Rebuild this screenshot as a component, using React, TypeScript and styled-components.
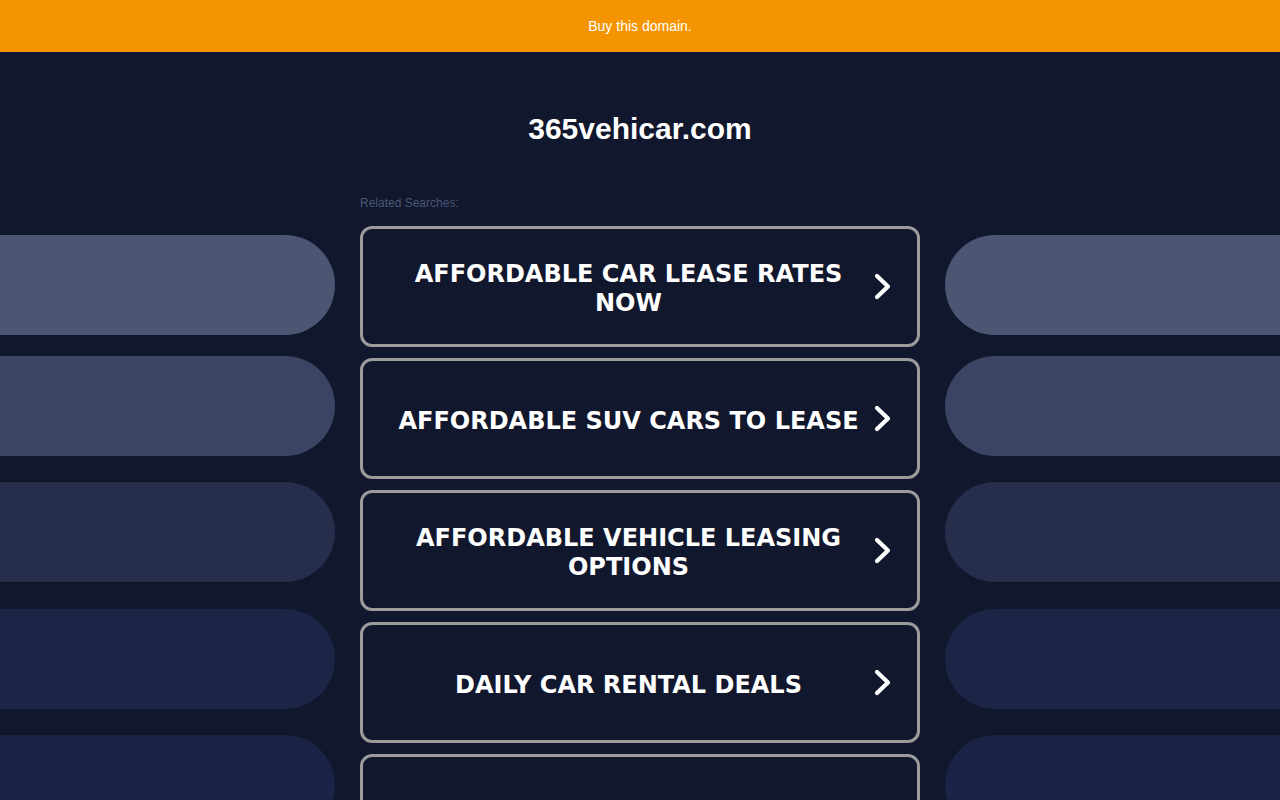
import React from "react";
import styled, { createGlobalStyle } from "styled-components";

const GlobalStyle = createGlobalStyle`
  html, body {
    margin: 0;
    padding: 0;
    background: #11172c;
    overflow: hidden;
  }
  body {
    font-family: "Liberation Sans", Arial, sans-serif;
  }
`;

const Page = styled.div`
  width: 1280px;
  height: 800px;
  background: #11172c;
  overflow: hidden;
`;

const TopBar = styled.a`
  display: flex;
  align-items: center;
  justify-content: center;
  height: 52px;
  background: #f39400;
  color: #ffffff;
  font-size: 14px;
  text-decoration: none;
`;

const Title = styled.h1`
  margin: 59px 0 0;
  height: 36px;
  line-height: 36px;
  text-align: center;
  color: #ffffff;
  font-size: 30px;
  font-weight: 700;
`;

const Grid = styled.div`
  display: grid;
  grid-template-columns: 335px 560px 335px;
  column-gap: 25px;
  margin-top: 49px;
`;

const Side = styled.div`
  display: flex;
  flex-direction: column;
  padding-top: 39px;
`;

const Pill = styled.div<{ $color: string; $gap: number; $side: "left" | "right" }>`
  height: 100px;
  margin-top: ${(p) => p.$gap}px;
  background: ${(p) => p.$color};
  border-radius: ${(p) => (p.$side === "left" ? "0 50px 50px 0" : "50px 0 0 50px")};
  flex-shrink: 0;
`;

const Center = styled.div`
  display: flex;
  flex-direction: column;
`;

const Label = styled.div`
  height: 14px;
  line-height: 14px;
  font-size: 12px;
  color: #4b5678;
  margin-bottom: 16px;
`;

const Cards = styled.div`
  display: flex;
  flex-direction: column;
  gap: 11px;
`;

const Card = styled.a`
  box-sizing: border-box;
  height: 121px;
  border: 3px solid #9b9b9b;
  border-radius: 12px;
  display: flex;
  align-items: center;
  padding: 0 19px 0 26px;
  text-decoration: none;
  flex-shrink: 0;
`;

const CardText = styled.span`
  flex: 1;
  text-align: center;
  color: #ffffff;
  font-family: "DejaVu Sans", Verdana, sans-serif;
  font-weight: 700;
  font-size: 24px;
  line-height: 29px;
  padding-top: 5px;
  text-transform: uppercase;
`;

const Chevron = styled.span`
  width: 30px;
  display: flex;
  justify-content: center;
  align-items: center;
`;

const pills = [
  { color: "#4c5673", gap: 0 },
  { color: "#3b4462", gap: 21 },
  { color: "#262e4c", gap: 26 },
  { color: "#1d2546", gap: 27 },
  { color: "#1b2346", gap: 26 },
];

const searches = [
  "Affordable Car Lease Rates Now",
  "Affordable SUV Cars To Lease",
  "Affordable Vehicle Leasing Options",
  "Daily Car Rental Deals",
  "Car Leasing Specials",
];

const ChevronIcon = () => (
  <svg width="18" height="27" viewBox="0 0 18 27" fill="none">
    <path
      d="M3 3 L14 13.5 L3 24"
      stroke="#ffffff"
      strokeWidth="4.2"
      strokeLinecap="round"
      strokeLinejoin="round"
    />
  </svg>
);

export default function App() {
  return (
    <Page>
      <GlobalStyle />
      <TopBar href="#">Buy this domain.</TopBar>
      <Title>365vehicar.com</Title>
      <Grid>
        <Side>
          {pills.map((p, i) => (
            <Pill key={i} $color={p.color} $gap={p.gap} $side="left" />
          ))}
        </Side>
        <Center>
          <Label>Related Searches:</Label>
          <Cards>
            {searches.map((s) => (
              <Card key={s} href="#">
                <CardText>{s}</CardText>
                <Chevron>
                  <ChevronIcon />
                </Chevron>
              </Card>
            ))}
          </Cards>
        </Center>
        <Side>
          {pills.map((p, i) => (
            <Pill key={i} $color={p.color} $gap={p.gap} $side="right" />
          ))}
        </Side>
      </Grid>
    </Page>
  );
}
